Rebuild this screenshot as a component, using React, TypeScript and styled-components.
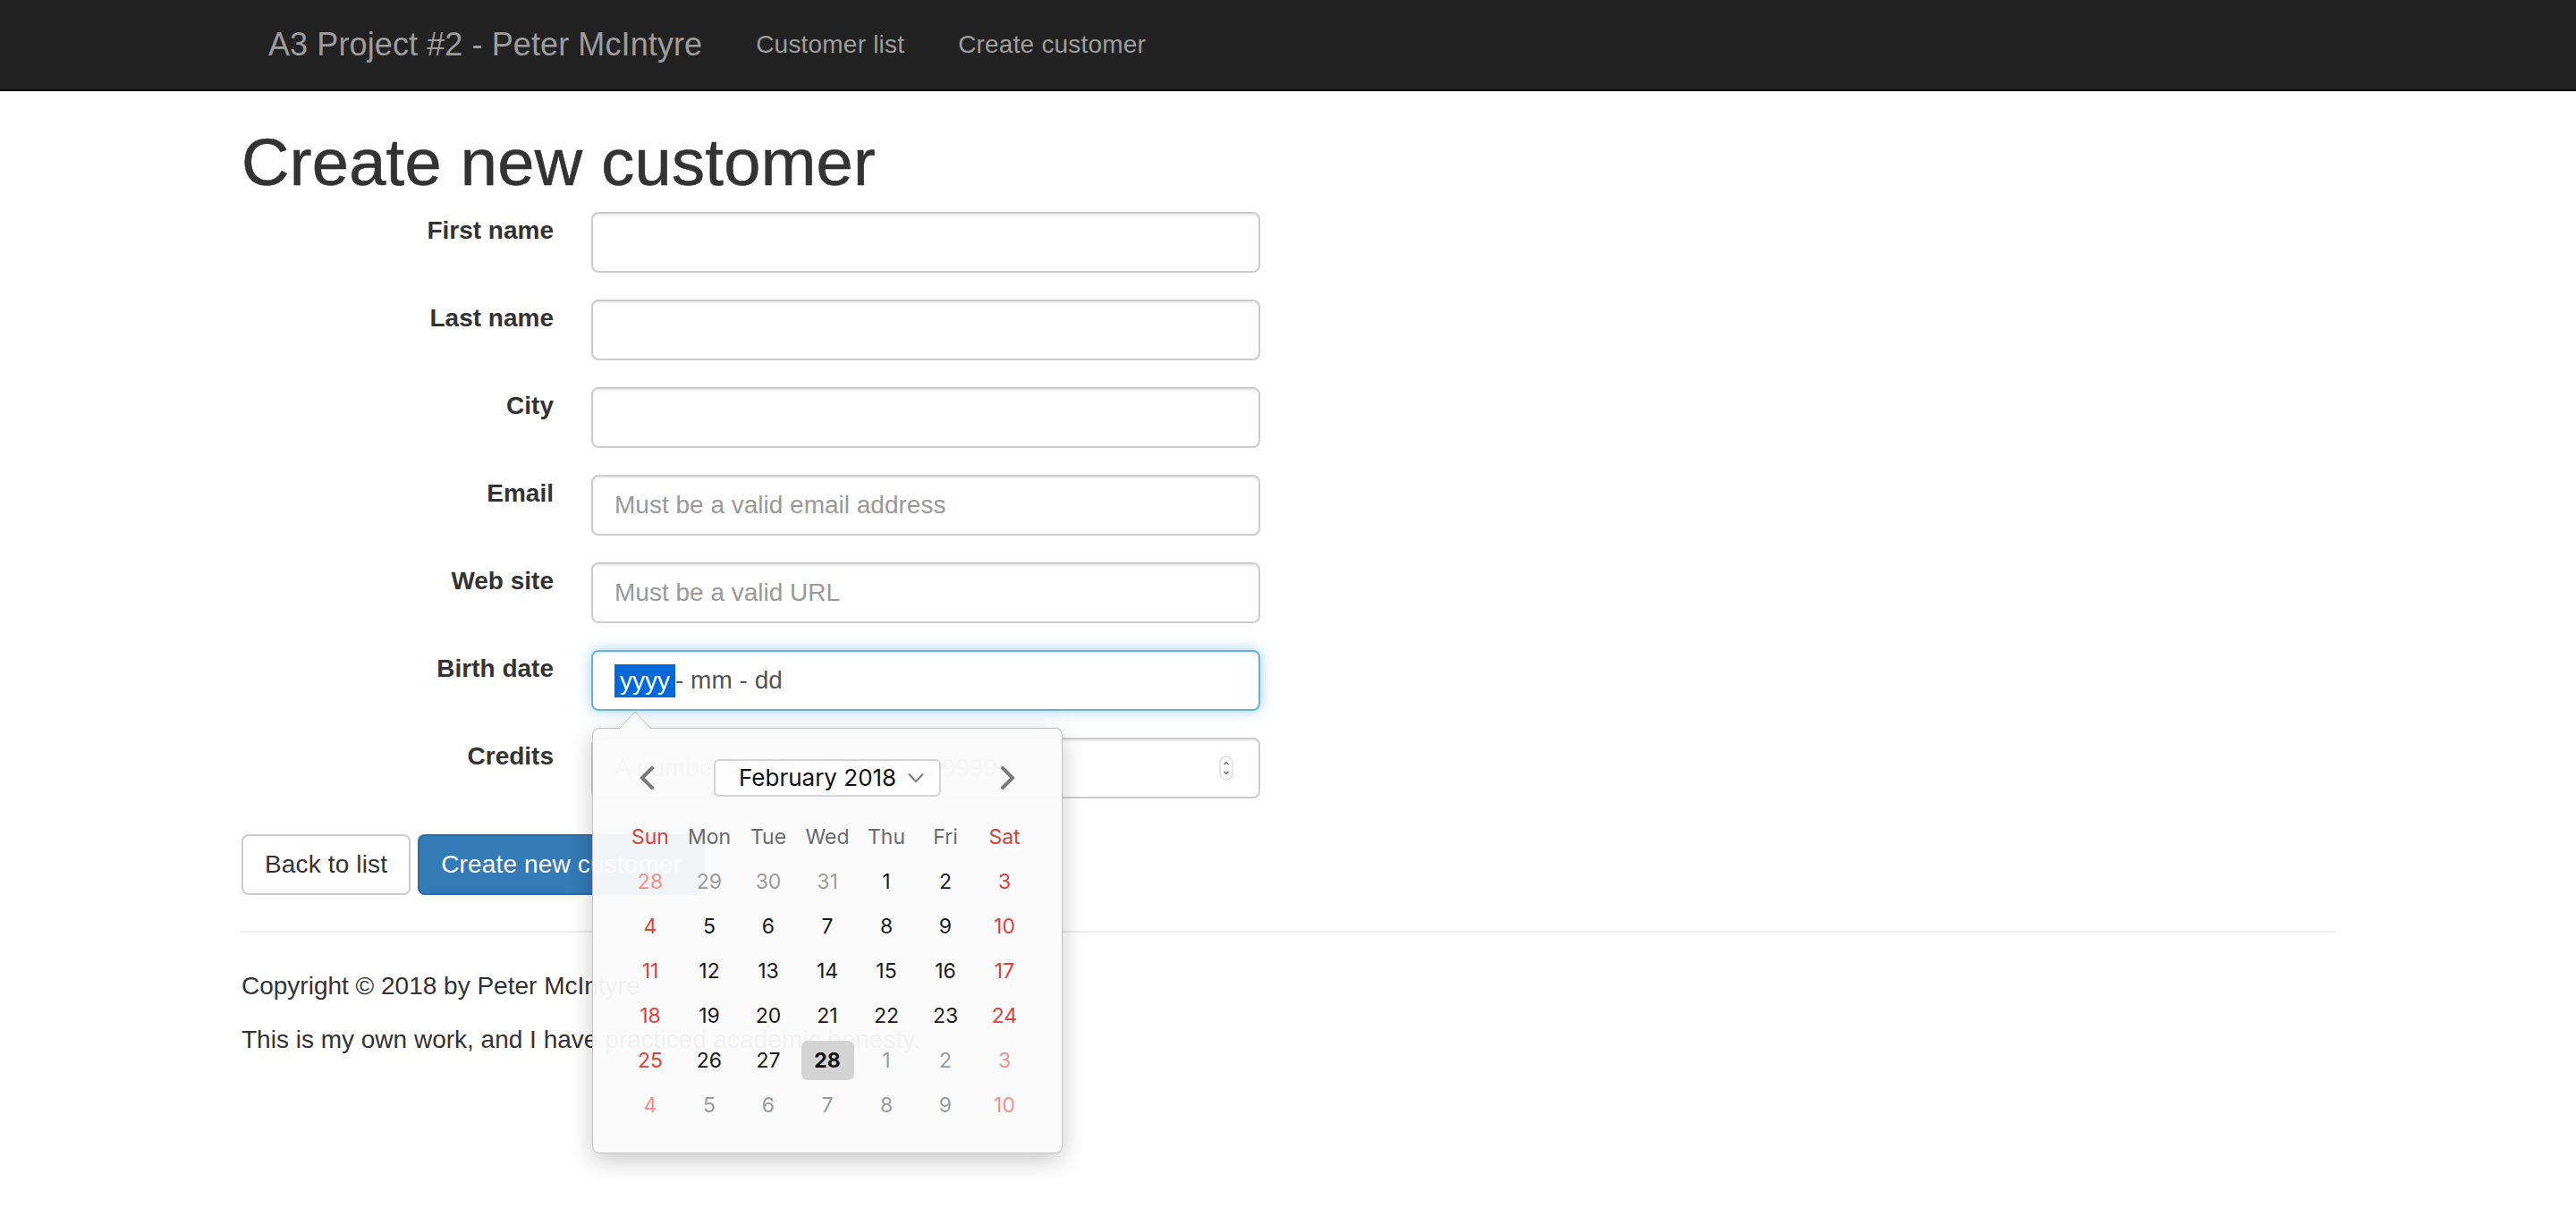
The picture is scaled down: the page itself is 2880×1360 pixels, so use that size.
import React from "react";
import styled, { createGlobalStyle } from "styled-components";

const GlobalStyle = createGlobalStyle`
  html, body {
    margin: 0;
    padding: 0;
    background: #ffffff;
  }
  body {
    min-height: 100vh;
    font-family: "Liberation Sans", Arial, Helvetica, sans-serif;
    font-size: 28px;
    line-height: 40px;
    color: #333333;
  }
  #root {
    min-height: 100vh;
  }
  *, *::before, *::after {
    box-sizing: border-box;
  }
`;

/* ---------- Navbar ---------- */
const Navbar = styled.nav`
  height: 102px;
  background: #222222;
  border-bottom: 2px solid #080808;
`;

const NavInner = styled.div`
  width: 2340px;
  margin: 0 auto;
  padding: 0 30px;
  display: flex;
  align-items: flex-start;
`;

const Brand = styled.a`
  display: block;
  margin-left: -30px;
  padding: 30px;
  height: 100px;
  font-size: 36px;
  line-height: 40px;
  letter-spacing: 0.1px;
  color: #9d9d9d;
  text-decoration: none;
  white-space: nowrap;
`;

const NavList = styled.ul`
  display: flex;
  margin: 0;
  padding: 0;
  list-style: none;
`;

const NavLink = styled.a`
  display: block;
  padding: 30px;
  font-size: 28px;
  line-height: 40px;
  letter-spacing: 0.2px;
  color: #9d9d9d;
  text-decoration: none;
  white-space: nowrap;
`;

/* ---------- Page ---------- */
const Main = styled.main`
  width: 2340px;
  margin: 0 auto;
`;

const Title = styled.h1`
  margin: 40px 0 16px;
  font-size: 74px;
  line-height: 79px;
  font-weight: 400;
  letter-spacing: 0.3px;
  color: #333333;
  -webkit-text-stroke: 0.6px #333333;
`;

const Form = styled.form`
  display: flex;
  flex-direction: column;
  gap: 30px;
`;

const FieldRow = styled.div`
  display: grid;
  grid-template-columns: 349px 748px;
  column-gap: 42px;
  align-items: start;
`;

const Label = styled.label`
  padding-top: 1px;
  text-align: right;
  font-weight: 700;
  line-height: 40px;
  color: #333333;
`;

const TextInput = styled.input`
  display: block;
  width: 100%;
  height: 68px;
  padding: 12px 24px;
  font-family: inherit;
  font-size: 28px;
  line-height: 40px;
  color: #555555;
  background: #ffffff;
  border: 2px solid #cccccc;
  border-radius: 8px;
  box-shadow: inset 0 2px 2px rgba(0, 0, 0, 0.075);
  outline: none;

  &::placeholder {
    color: #999999;
    opacity: 1;
  }
`;

const InputWrap = styled.div`
  position: relative;
`;

const Spinner = styled.svg`
  position: absolute;
  right: 30px;
  top: 20px;
`;

const DateBox = styled.div`
  display: flex;
  align-items: center;
  height: 68px;
  padding: 0 24px;
  font-size: 28px;
  color: #555555;
  background: #ffffff;
  border: 2px solid #66afe9;
  border-radius: 8px;
  box-shadow: inset 0 2px 2px rgba(0, 0, 0, 0.075),
    0 0 16px rgba(102, 175, 233, 0.6);
  white-space: pre;
`;

const SelectedSegment = styled.span`
  display: inline-block;
  padding: 0 6px;
  line-height: 37px;
  background: #0068d9;
  color: #ffffff;
`;

/* ---------- Calendar popup ---------- */
const Popup = styled.div`
  position: absolute;
  left: 1px;
  top: 87px;
  width: 526px;
  padding: 34px 31px 28px;
  background: rgba(250, 250, 250, 0.955);
  border: 1px solid rgba(0, 0, 0, 0.22);
  border-radius: 8px;
  box-shadow: 0 8px 26px rgba(0, 0, 0, 0.22);
  font-family: Inter, "Liberation Sans", sans-serif;
  z-index: 10;
`;

const PopupArrow = styled.svg`
  position: absolute;
  left: 29px;
  top: -20px;
`;

const CalHeader = styled.div`
  display: flex;
  align-items: center;
  justify-content: space-between;
  height: 42px;
`;

const NavButton = styled.button`
  display: flex;
  align-items: center;
  justify-content: center;
  width: 58px;
  height: 42px;
  padding: 0;
  background: transparent;
  border: 0;
`;

const MonthSelect = styled.div`
  display: flex;
  align-items: center;
  justify-content: space-between;
  width: 254px;
  height: 42px;
  padding: 0 17px 0 26px;
  background: rgba(255, 255, 255, 0.7);
  border: 2px solid #d4d4d4;
  border-radius: 6px;
  font-size: 26px;
  color: #111111;
  white-space: nowrap;
`;

const Grid = styled.div`
  display: grid;
  grid-template-columns: repeat(7, 66px);
  grid-auto-rows: 50px;
  margin-top: 20px;
`;

type Tone = "head" | "headWeekend" | "cur" | "muted" | "weekend" | "weekendMuted";

const toneColor: Record<Tone, string> = {
  head: "#6b6b6b",
  headWeekend: "#d9433a",
  cur: "#1a1a1a",
  muted: "#9b9b9b",
  weekend: "#d9433a",
  weekendMuted: "#f3918a",
};

const Cell = styled.div<{ $tone: Tone }>`
  display: flex;
  align-items: center;
  justify-content: center;
  font-size: 23px;
  color: ${(p) => toneColor[p.$tone]};
`;

const Selected = styled.span`
  display: flex;
  align-items: center;
  justify-content: center;
  width: 59px;
  height: 44px;
  border-radius: 7px;
  background: #d3d3d3;
  font-weight: 700;
  color: #111111;
`;

/* ---------- Buttons / footer ---------- */
const ButtonRow = styled.div`
  display: flex;
  gap: 8px;
  margin-top: 10px;
`;

const Button = styled.button<{ $primary?: boolean }>`
  height: 68px;
  padding: 12px 24px;
  font-family: inherit;
  font-size: 28px;
  line-height: 40px;
  letter-spacing: 0.15px;
  border-radius: 8px;
  border: 2px solid ${(p) => (p.$primary ? "#2e6da4" : "#cccccc")};
  background: ${(p) => (p.$primary ? "#337ab7" : "#ffffff")};
  color: ${(p) => (p.$primary ? "#ffffff" : "#333333")};
  white-space: nowrap;
`;

const Divider = styled.hr`
  height: 0;
  margin: 40px 0;
  border: 0;
  border-top: 2px solid #eeeeee;
`;

const FooterText = styled.p`
  margin: 0 0 20px;
`;

/* ---------- Data ---------- */
type Day = { n: number; tone: Tone; selected?: boolean };

function buildDays(): Day[] {
  const days: Day[] = [];
  const push = (n: number, inMonth: boolean, idx: number, selected = false) => {
    const weekend = idx % 7 === 0 || idx % 7 === 6;
    const tone: Tone = inMonth
      ? weekend
        ? "weekend"
        : "cur"
      : weekend
      ? "weekendMuted"
      : "muted";
    days.push({ n, tone, selected });
  };
  let i = 0;
  [28, 29, 30, 31].forEach((n) => push(n, false, i++));
  for (let n = 1; n <= 28; n++) push(n, true, i++, n === 28);
  for (let n = 1; n <= 10; n++) push(n, false, i++);
  return days;
}

const weekdays = ["Sun", "Mon", "Tue", "Wed", "Thu", "Fri", "Sat"];

const fields = [
  { label: "First name", placeholder: "" },
  { label: "Last name", placeholder: "" },
  { label: "City", placeholder: "" },
  { label: "Email", placeholder: "Must be a valid email address" },
  { label: "Web site", placeholder: "Must be a valid URL" },
];

const Chevron = ({ dir }: { dir: "left" | "right" }) => (
  <svg width="20" height="26" viewBox="0 0 20 26">
    <polyline
      points={dir === "left" ? "16,2 5,13 16,24" : "4,2 15,13 4,24"}
      fill="none"
      stroke="#7b7b7b"
      strokeWidth="4"
      strokeLinecap="round"
      strokeLinejoin="round"
    />
  </svg>
);

const CalendarPopup = () => {
  const days = buildDays();
  return (
    <Popup>
      <PopupArrow width="36" height="20" viewBox="0 0 36 20">
        <polygon points="0,20 18,1 36,20" fill="rgb(250,250,250)" />
        <polyline points="0,20 18,1 36,20" fill="none" stroke="rgba(0,0,0,0.22)" strokeWidth="1" />
      </PopupArrow>
      <CalHeader>
        <NavButton type="button">
          <Chevron dir="left" />
        </NavButton>
        <MonthSelect>
          <span>February 2018</span>
          <svg width="18" height="12" viewBox="0 0 18 12">
            <polyline points="1,1.5 9,10 17,1.5" fill="none" stroke="#7a7a7a" strokeWidth="2" />
          </svg>
        </MonthSelect>
        <NavButton type="button">
          <Chevron dir="right" />
        </NavButton>
      </CalHeader>
      <Grid>
        {weekdays.map((w, i) => (
          <Cell key={w} $tone={i === 0 || i === 6 ? "headWeekend" : "head"}>
            {w}
          </Cell>
        ))}
        {days.map((d, i) => (
          <Cell key={i} $tone={d.tone}>
            {d.selected ? <Selected>{d.n}</Selected> : d.n}
          </Cell>
        ))}
      </Grid>
    </Popup>
  );
};

export default function App() {
  return (
    <>
      <GlobalStyle />
      <Navbar>
        <NavInner>
          <Brand href="#">A3 Project #2 - Peter McIntyre</Brand>
          <NavList>
            <li>
              <NavLink href="#">Customer list</NavLink>
            </li>
            <li>
              <NavLink href="#">Create customer</NavLink>
            </li>
          </NavList>
        </NavInner>
      </Navbar>
      <Main>
        <Title>Create new customer</Title>
        <Form onSubmit={(e) => e.preventDefault()}>
          {fields.map((f) => (
            <FieldRow key={f.label}>
              <Label>{f.label}</Label>
              <TextInput type="text" placeholder={f.placeholder} />
            </FieldRow>
          ))}
          <FieldRow>
            <Label>Birth date</Label>
            <InputWrap>
              <DateBox>
                <SelectedSegment>yyyy</SelectedSegment>
                <span>- mm - dd</span>
              </DateBox>
              <CalendarPopup />
            </InputWrap>
          </FieldRow>
          <FieldRow>
            <Label>Credits</Label>
            <InputWrap>
              <TextInput type="text" placeholder="A number between 1000 and 9999" />
              <Spinner width="16" height="28" viewBox="0 0 16 28">
                <rect x="1" y="1" width="14" height="26" rx="7" fill="#ffffff" stroke="#c9c9c9" strokeWidth="1" />
                <polyline points="5.5,10 8,7.5 10.5,10" fill="none" stroke="#555" strokeWidth="1.2" />
                <polyline points="5.5,18 8,20.5 10.5,18" fill="none" stroke="#555" strokeWidth="1.2" />
              </Spinner>
            </InputWrap>
          </FieldRow>
          <ButtonRow>
            <Button type="button">Back to list</Button>
            <Button type="submit" $primary>
              Create new customer
            </Button>
          </ButtonRow>
        </Form>
        <Divider />
        <FooterText>Copyright © 2018 by Peter McIntyre</FooterText>
        <FooterText>This is my own work, and I have practiced academic honesty.</FooterText>
      </Main>
    </>
  );
}
